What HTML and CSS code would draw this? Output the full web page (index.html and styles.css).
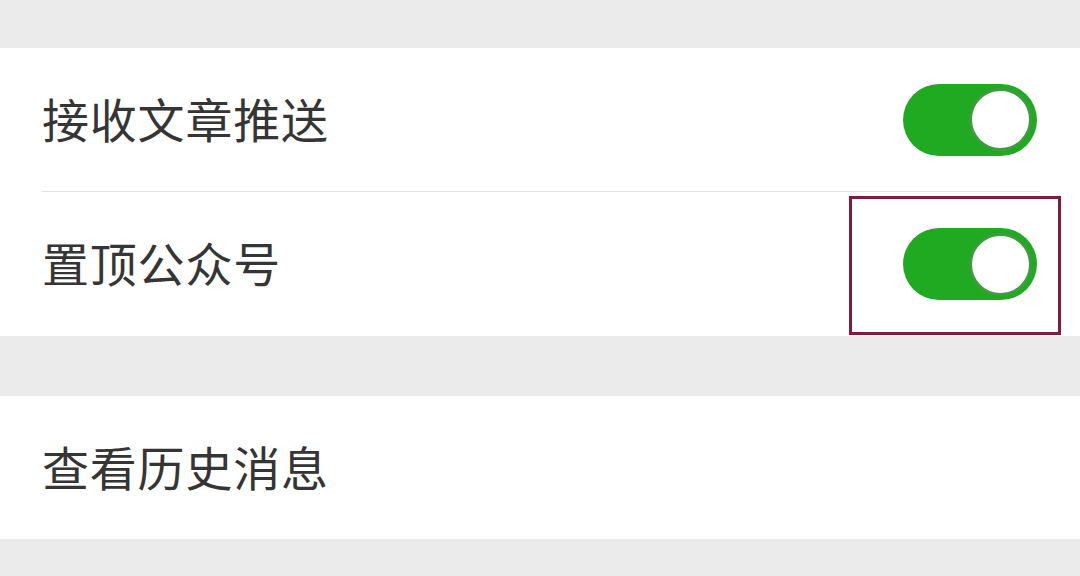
FILE: index.html
```html
<!DOCTYPE html>
<html lang="zh-CN">
<head>
<meta charset="utf-8">
<link rel="stylesheet" href="styles.css">
</head>
<body>
<div class="page">
  <div class="group">
    <div class="row">
      <span class="label">接收文章推送</span>
      <span class="toggle"><span class="knob"></span></span>
    </div>
    <div class="divider"></div>
    <div class="row row-marked">
      <span class="label">置顶公众号</span>
      <span class="toggle"><span class="knob"></span></span>
      <span class="mark"></span>
    </div>
  </div>
  <div class="group group-second">
    <div class="row">
      <span class="label">查看历史消息</span>
    </div>
  </div>
</div>
</body>
</html>
```

FILE: styles.css
```css
html, body {
  margin: 0;
  padding: 0;
  background: #ebebeb;
}
.page {
  width: 1080px;
  height: 576px;
  overflow: hidden;
  padding-top: 48px;
  box-sizing: border-box;
  font-family: "Noto Sans CJK SC", "Noto Sans", sans-serif;
}
.group {
  background: #ffffff;
}
.group-second {
  margin-top: 60px;
}
.row {
  position: relative;
  height: 144px;
  display: flex;
  align-items: center;
  justify-content: space-between;
  padding: 0 43px 0 42px;
  box-sizing: border-box;
}
.group > .row:first-child {
  height: 143px;
}
.label {
  font-size: 47px;
  color: #353535;
  line-height: 1;
  letter-spacing: 0.8px;
  margin-bottom: 5px;
}
.divider {
  height: 1px;
  margin: 0 40px 0 42px;
  background: #e2e2e2;
}
.toggle {
  width: 134px;
  height: 72px;
  border-radius: 36px;
  background: #1faa22;
  display: flex;
  align-items: center;
  justify-content: flex-end;
  padding-right: 4px;
  box-sizing: border-box;
}
.knob {
  width: 63px;
  height: 63px;
  border-radius: 50%;
  background: #ffffff;
  border: 3px solid #3e9c3e;
  box-sizing: border-box;
  margin-right: 1px;
}
.mark {
  position: absolute;
  left: 849px;
  top: 4px;
  width: 212px;
  height: 139px;
  border: 3px solid #7a1e3b;
  box-sizing: border-box;
}
```
